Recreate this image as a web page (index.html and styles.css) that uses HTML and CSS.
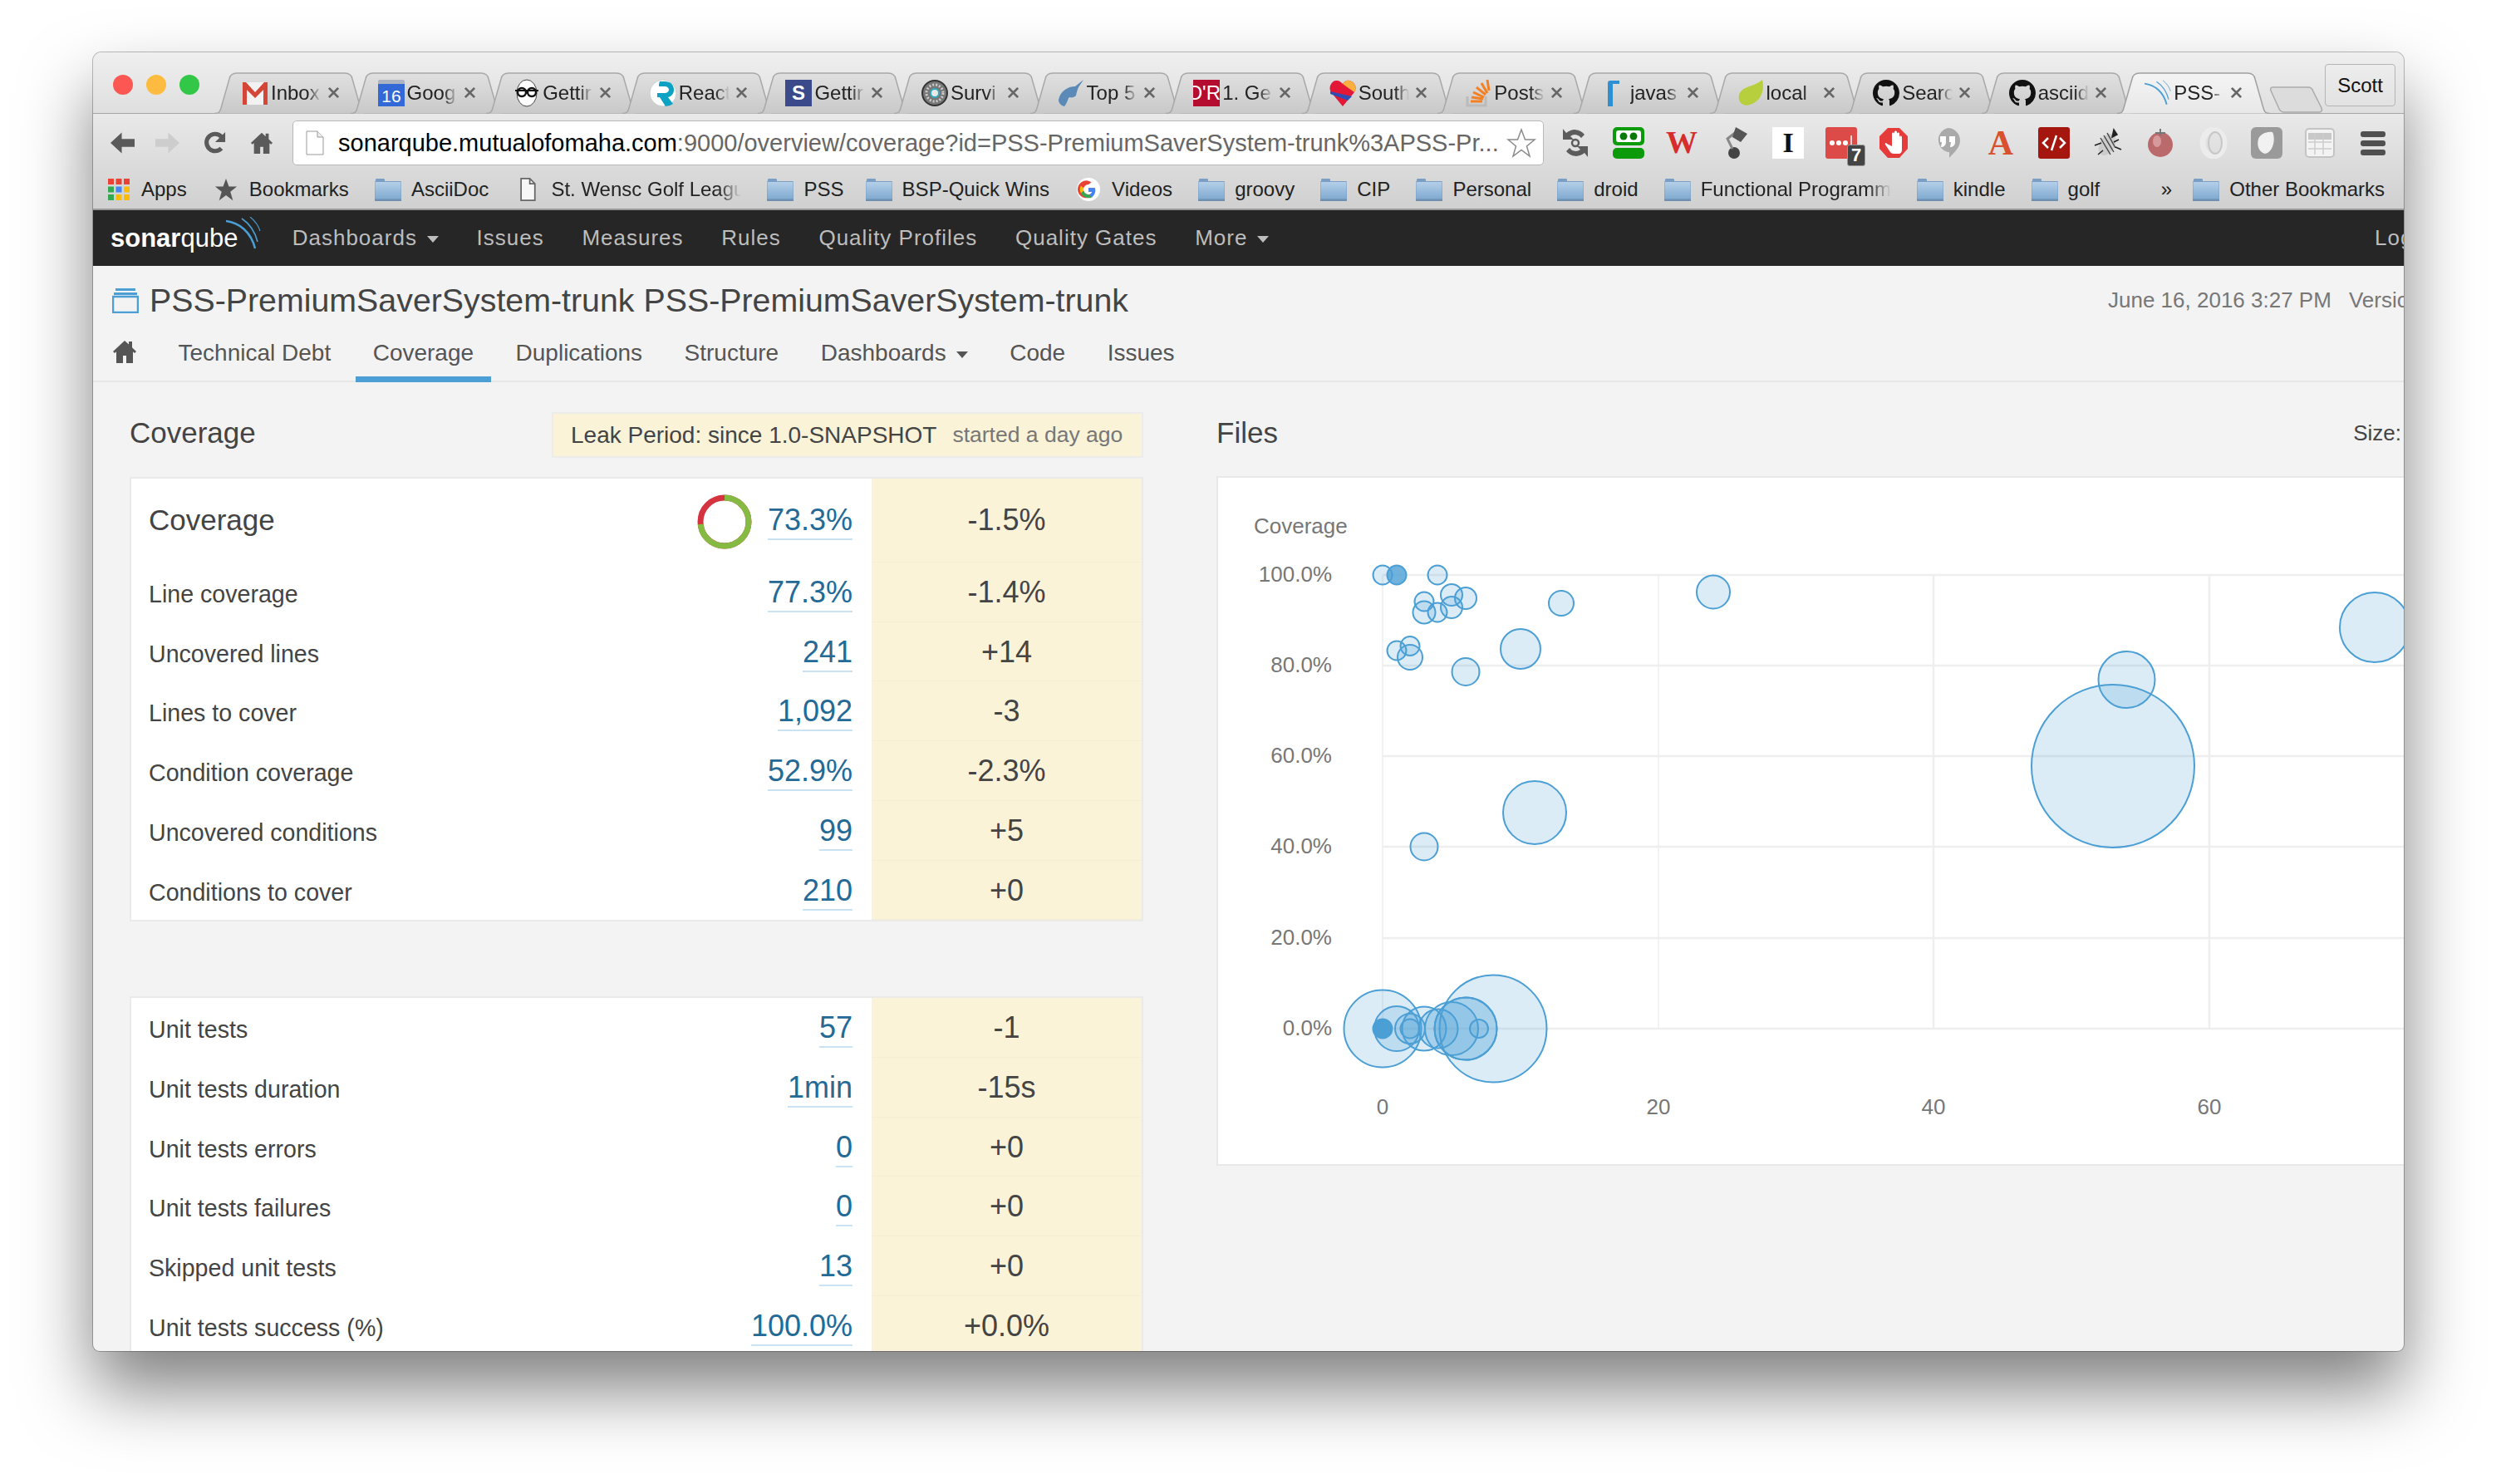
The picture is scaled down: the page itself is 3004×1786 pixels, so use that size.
FILE: index.html
```html
<!DOCTYPE html>
<html lang="en">
<head>
  <meta charset="UTF-8" />
  <title>PSS-PremiumSaverSystem-trunk - Coverage</title>
  <link rel="stylesheet" href="styles.css">
</head>
<body>
  <!-- shared icons -->
  <svg class="defs" width="0" height="0">
    <defs>
      <linearGradient id="tabFill" x1="0" y1="0" x2="0" y2="1"><stop offset="0" stop-color="#e0e0e0"/><stop offset="1" stop-color="#c9c9c9"/></linearGradient>
      <linearGradient id="tabActive" x1="0" y1="0" x2="0" y2="1"><stop offset="0" stop-color="#f4f4f4"/><stop offset="1" stop-color="#e8e8e8"/></linearGradient>
      <linearGradient id="folderFill" x1="0" y1="0" x2="0" y2="1"><stop offset="0" stop-color="#b4cfe8"/><stop offset="1" stop-color="#7fa9d0"/></linearGradient>
      <symbol id="tabShape" viewBox="0 0 184 50"><path d="M0 49.5C6 49.5 7 47 8 43L18 8C19 3 22 1 27 1H157C162 1 165 3 166 8L176 43C177 47 178 49.5 184 49.5"/></symbol>
      <symbol id="close" viewBox="0 0 16 16"><path d="M2 2L14 14M14 2L2 14" fill="none" stroke="#666" stroke-width="3"/></symbol>
      <symbol id="folder" viewBox="0 0 32 28"><path d="M1 4V2.500C1 1.500 1.500 1 2.500 1h8C11.500 1 12 1.500 12 2.500V4h19c.5 0 1 .5 1 1v23H0V5c0-.5.500-1 1-1z" fill="#7b9fc4"/><rect x="0.500" y="5" width="31" height="21" fill="url(#folderFill)"/><rect y="25.500" width="32" height="2.500" fill="#6f8fb1"/></symbol>
      <symbol id="octocat" viewBox="0 0 16 16"><path fill="#111" d="M8 0C3.580 0 0 3.580 0 8c0 3.540 2.290 6.530 5.470 7.590.4.070.55-.17.55-.38 0-.19-.01-.82-.01-1.490-2.010.37-2.530-.49-2.690-.94-.09-.23-.48-.94-.82-1.130-.28-.15-.68-.52-.01-.53.63-.01 1.080.58 1.230.82.72 1.210 1.870.87 2.330.66.07-.52.28-.87.51-1.070-1.780-.2-3.640-.89-3.640-3.950 0-.87.31-1.590.82-2.150-.08-.2-.36-1.020.08-2.120 0 0 .67-.21 2.200.82.64-.18 1.320-.27 2-.27s1.360.09 2 .27c1.530-1.040 2.200-.82 2.200-.82.44 1.100.16 1.920.08 2.120.51.56.82 1.270.82 2.150 0 3.070-1.870 3.750-3.650 3.950.29.25.54.73.54 1.480 0 1.070-.01 1.930-.01 2.200 0 .21.15.46.55.38A8.013 8.013 0 0 0 16 8c0-4.420-3.580-8-8-8z"/></symbol>
      <symbol id="sonarArcs" viewBox="0 0 42 40"><path d="M0 5C16 7 30 18 35 38" fill="none" stroke="#4b9fd5" stroke-width="2.500"/><path d="M19 2C28 8 35 18 38 30" fill="none" stroke="#4b9fd5" stroke-width="1.600"/><path d="M29 0C35 5 39 10 41 17" fill="none" stroke="#4b9fd5" stroke-width="1.100"/></symbol>
      <symbol id="homeIcon" viewBox="0 0 30 30"><path d="M15 2L1 15l2 2 2-1.800V29h8v-9h4v9h8V15.200L27 17l2-2-5-4.700V3h-4v3.600z"/></symbol>
    </defs>
  </svg>

  <div class="window">
    <div class="tabstrip">
      <div class="lights"><i class="red"></i><i class="yellow"></i><i class="green"></i></div>
      <div class="tabs">
        <div class="tab"><svg class="shape"><use href="#tabShape"/></svg>
          <svg class="fav" viewBox="0 0 32 32"><rect x="1" y="3" width="30" height="27" fill="#f2f2f2"/><path d="M1 3h4l11 12L27 3h4v27h-5V12L16 22 6 12v18H1z" fill="#d44638"/></svg>
          <span class="label">Inbox</span><svg class="x"><use href="#close"/></svg></div>
        <div class="tab"><svg class="shape"><use href="#tabShape"/></svg>
          <svg class="fav" viewBox="0 0 32 32"><rect y="0" width="32" height="10" rx="2" fill="#aeb4c0"/><rect y="5" width="32" height="27" fill="#3369d6"/><text x="16" y="27" class="cal">16</text></svg>
          <span class="label">Goog</span><svg class="x"><use href="#close"/></svg></div>
        <div class="tab"><svg class="shape"><use href="#tabShape"/></svg>
          <svg class="fav" viewBox="0 0 32 32"><ellipse cx="16" cy="16" rx="12" ry="16" fill="#fff" stroke="#444"/><circle cx="10" cy="15" r="5" fill="none" stroke="#111" stroke-width="2.500"/><circle cx="22" cy="15" r="5" fill="none" stroke="#111" stroke-width="2.500"/><path d="M2 13h28" stroke="#111" stroke-width="2"/></svg>
          <span class="label">Gettir</span><svg class="x"><use href="#close"/></svg></div>
        <div class="tab"><svg class="shape"><use href="#tabShape"/></svg>
          <svg class="fav" viewBox="0 0 32 32"><circle cx="16" cy="16" r="16" fill="#fff" stroke="#ccc"/><path d="M12 2h6c7 0 11 4 11 10 0 5-3 8-7 9l6 8a16 16 0 0 1-9 3l-7-11H9v-5h9c3 0 5-2 5-4s-2-4-5-4h-7c0-2 0-4 1-6z" fill="#0da2c4"/></svg>
          <span class="label">React</span><svg class="x"><use href="#close"/></svg></div>
        <div class="tab"><svg class="shape"><use href="#tabShape"/></svg>
          <svg class="fav" viewBox="0 0 32 32"><rect width="32" height="32" fill="#3b4a8a"/><text x="16" y="24" class="stackS">S</text></svg>
          <span class="label">Gettir</span><svg class="x"><use href="#close"/></svg></div>
        <div class="tab"><svg class="shape"><use href="#tabShape"/></svg>
          <svg class="fav" viewBox="0 0 32 32"><circle cx="16" cy="16" r="15" fill="#777" stroke="#333" stroke-width="2"/><circle cx="16" cy="16" r="10" fill="none" stroke="#ccc" stroke-width="3" stroke-dasharray="2 2"/><circle cx="16" cy="16" r="5" fill="#e8e8e8" stroke="#3ab" stroke-width="2"/></svg>
          <span class="label">Survi</span><svg class="x"><use href="#close"/></svg></div>
        <div class="tab"><svg class="shape"><use href="#tabShape"/></svg>
          <svg class="fav" viewBox="0 0 32 32"><path d="M31 0L21 8C12 8 3 14 1 24c0 3 2 7 7 8 4-5 4-9 6-11 3 1 6 0 8-2 1-5 2-8 3-10z" fill="#5b8ab8"/></svg>
          <span class="label">Top 5</span><svg class="x"><use href="#close"/></svg></div>
        <div class="tab"><svg class="shape"><use href="#tabShape"/></svg>
          <svg class="fav clipped" viewBox="0 0 32 32"><rect width="32" height="32" fill="#b50d2f"/><text x="33" y="24" class="oreilly">O'R</text></svg>
          <span class="label">1. Ge</span><svg class="x"><use href="#close"/></svg></div>
        <div class="tab"><svg class="shape"><use href="#tabShape"/></svg>
          <svg class="fav" viewBox="0 0 32 32"><path d="M16 32L2 15C-2 9 3 0 9 1c3 0 5 2 7 4 2-3 5-5 8-4 6 1 10 8 6 14z" fill="#e31837"/><path d="M16 5c2-3 5-5 8-4 6 1 10 8 6 14z" fill="#fbb040"/><path d="M1 14l26 6-5 5-21-8z" fill="#304cb2"/></svg>
          <span class="label">South</span><svg class="x"><use href="#close"/></svg></div>
        <div class="tab"><svg class="shape"><use href="#tabShape"/></svg>
          <svg class="fav" viewBox="0 0 32 32"><path d="M3 20v11h22V20" fill="none" stroke="#bbb" stroke-width="3"/><path d="M7 26h14M8 21l14 2M10 15l13 6M14 9l11 9M20 4l7 12M27 0l2 13" stroke="#f48024" stroke-width="3"/></svg>
          <span class="label">Posts</span><svg class="x"><use href="#close"/></svg></div>
        <div class="tab"><svg class="shape"><use href="#tabShape"/></svg>
          <svg class="fav" viewBox="0 0 32 32"><path d="M8 32V4c0-2 1-3 3-3h11v4H14v27z" fill="#2f8fd2"/></svg>
          <span class="label">javas</span><svg class="x"><use href="#close"/></svg></div>
        <div class="tab"><svg class="shape"><use href="#tabShape"/></svg>
          <svg class="fav" viewBox="0 0 32 32"><path d="M30 0c3 12-1 26-15 30C6 33 0 26 2 18 6 7 20 9 30 0z" fill="#b7cf3d"/></svg>
          <span class="label">local</span><svg class="x"><use href="#close"/></svg></div>
        <div class="tab"><svg class="shape"><use href="#tabShape"/></svg>
          <svg class="fav"><use href="#octocat"/></svg>
          <span class="label">Searc</span><svg class="x"><use href="#close"/></svg></div>
        <div class="tab"><svg class="shape"><use href="#tabShape"/></svg>
          <svg class="fav"><use href="#octocat"/></svg>
          <span class="label">asciid</span><svg class="x"><use href="#close"/></svg></div>
        <div class="tab active"><svg class="shape"><use href="#tabShape"/></svg>
          <svg class="fav"><use href="#sonarArcs"/></svg>
          <span class="label">PSS-</span><svg class="x"><use href="#close"/></svg></div>
      </div>
      <svg class="newtab" viewBox="0 0 64 32"><path d="M3 1H46C49 1 51 3 52 6L62 26C63 29 62 31 59 31H17C14 31 12 29 11 27L1 5C0 3 1 1 3 1z"/></svg>
      <div class="profile">Scott</div>
    </div>

    <div class="chrome">
      <div class="toolbar">
        <svg class="navbtn" viewBox="0 0 32 32" fill="#5a5a5a"><path d="M15 3L1 16l14 13v-8h16v-10H15z"/></svg>
        <svg class="navbtn" viewBox="0 0 32 32" fill="#cdcdcd"><path d="M17 3l14 13-14 13v-8H1v-10h16z"/></svg>
        <svg class="navbtn reload" viewBox="0 0 30 32"><path d="M24 23a11 11 0 1 1 0-15" fill="none" stroke="#5a5a5a" stroke-width="5.500"/><path d="M29 2v13H16z" fill="#5a5a5a"/></svg>
        <svg class="navbtn home" fill="#5a5a5a"><use href="#homeIcon"/></svg>
        <div class="omnibox">
          <svg class="pageicon" viewBox="0 0 22 30"><path d="M1 1h13l7 7v21H1z" fill="#fff" stroke="#999"/><path d="M14 1v7h7" fill="#eee" stroke="#999"/></svg>
          <div class="url"><b>sonarqube.mutualofomaha.com</b>:9000/overview/coverage?id=PSS-PremiumSaverSystem-trunk%3APSS-Pr...</div>
          <svg class="star" viewBox="0 0 36 36"><path d="M18 2l4.500 12H34l-9.500 8 3.500 12-10-7.500L8 34l3.500-12L2 14h11.500z" fill="#fff" stroke="#8a8a8a" stroke-width="1.500"/></svg>
        </div>
        <div class="extensions">
          <svg class="ext" viewBox="0 0 38 38"><path d="M30 9a15 15 0 0 0-22-2L4 2v13h13l-4-4a9 9 0 0 1 13 2zM8 29a15 15 0 0 0 22 2l4 5V23H21l4 4a9 9 0 0 1-13-2z" fill="#5c5c5c"/><circle cx="19" cy="19" r="4" fill="none" stroke="#5c5c5c" stroke-width="2.500"/></svg>
          <svg class="ext" viewBox="0 0 38 38"><rect width="38" height="22" rx="5" fill="#0a9a0a"/><rect x="4" y="4" width="30" height="14" rx="3" fill="#fff"/><circle cx="13" cy="11" r="4.500" fill="#0a7a0a"/><circle cx="25" cy="11" r="4.500" fill="#0a7a0a"/><rect y="25" width="38" height="13" rx="5" fill="#0a9a0a"/></svg>
          <svg class="ext" viewBox="0 0 38 38"><text x="19" y="31" class="extW">W</text></svg>
          <svg class="ext" viewBox="0 0 38 38"><circle cx="18" cy="31" r="7" fill="#444"/><path d="M16 26L10 14l14-11" fill="none" stroke="#888" stroke-width="3"/><path d="M20 0l14 8-8 10-10-6z" fill="#555"/></svg>
          <svg class="ext" viewBox="0 0 38 38"><rect width="38" height="38" fill="#fff"/><text x="19" y="30" class="extI">I</text></svg>
          <span class="ext-badge">
            <svg class="ext" viewBox="0 0 38 38"><rect width="38" height="38" rx="3" fill="#dd4b48"/><circle cx="8" cy="19" r="3" fill="#fff"/><circle cx="16" cy="19" r="3" fill="#fff"/><circle cx="24" cy="19" r="3" fill="#fff"/><path d="M31 10v18" stroke="#fff" stroke-width="1.500"/></svg>
            <span class="count">7</span>
          </span>
          <svg class="ext" viewBox="0 0 38 38"><path d="M11 1h14l10 10v15L25 37H11L1 26V11z" fill="#e53b3b"/><path d="M10 20c-1-2-3-1-2 1l6 9c1 1 2 2 4 2h6c3 0 4-2 4-5V12c0-2-3-2-3 0v5V8c0-2-3-2-3 0v9V6c0-2-3-2-3 0v11V8c0-2-3-2-3 0v15z" fill="#fff"/></svg>
          <svg class="ext" viewBox="0 0 38 38"><path d="M19 1a15 15 0 0 1 15 15c0 9-7 14-13 21v-7a14.500 14.500 0 0 1-2 0A15 15 0 0 1 19 1z" fill="#aaa"/><path d="M10 11h7v7c0 4-3 6-6 6l1-6h-2zM21 11h7v7c0 4-3 6-6 6l1-6h-2z" fill="#fff"/></svg>
          <svg class="ext" viewBox="0 0 38 38"><text x="19" y="33" class="extA">A</text></svg>
          <svg class="ext" viewBox="0 0 38 38"><rect width="38" height="38" rx="3" fill="#a5160f"/><path d="M12 13l-6 6 6 6M26 13l6 6-6 6M22 10l-6 18" fill="none" stroke="#fff" stroke-width="2.500"/></svg>
          <svg class="ext" viewBox="0 0 38 38"><ellipse cx="19" cy="21" rx="9" ry="14" transform="rotate(30 19 21)" fill="#ccc"/><path d="M11 13l12 20M15 10l12 20M19 7l10 18" stroke="#444" stroke-width="1.400"/><path d="M27 3l4 6-6 3zM4 22l8-3M8 33l6-5M33 15l-6 3M36 27l-7-3" stroke="#222" stroke-width="1.500" fill="#222"/></svg>
          <svg class="ext" viewBox="0 0 38 38"><circle cx="19" cy="21" r="15" fill="#bb6a6c"/><ellipse cx="15" cy="17" rx="5" ry="7" fill="#d69a9c"/><path d="M19 2v8M13 7h12" stroke="#777" stroke-width="2"/></svg>
          <svg class="ext" viewBox="0 0 38 38"><ellipse cx="19" cy="19" rx="13" ry="16" fill="none" stroke="#ececec" stroke-width="7"/><ellipse cx="21" cy="19" rx="8" ry="13" fill="none" stroke="#c6c6c6" stroke-width="2"/></svg>
          <svg class="ext" viewBox="0 0 38 38"><rect width="38" height="38" rx="6" fill="#9a9a9a"/><path d="M26 6c4 8 1 24-9 26C9 30 6 20 10 12c4-5 10-7 16-6z" fill="#f1f1f1"/></svg>
          <svg class="ext" viewBox="0 0 38 38"><rect x="2" y="2" width="34" height="34" rx="4" fill="#f3f3f3" stroke="#c4c4c4" stroke-width="2"/><path d="M5 7h28v8H5z" fill="#c8c8c8"/><path d="M13 7v26M23 7v26M5 18h28M5 26h28" stroke="#ccc" stroke-width="1.500"/></svg>
          <svg class="ext" viewBox="0 0 38 38"><rect x="4" y="5" width="30" height="7" rx="3" fill="#505050"/><rect x="4" y="16" width="30" height="7" rx="3" fill="#505050"/><rect x="4" y="27" width="30" height="7" rx="3" fill="#505050"/></svg>
        </div>
      </div>
      <div class="bookmarks">
        <a class="bm"><svg class="bm-icon apps" viewBox="0 0 26 26"><rect width="7" height="7" fill="#ea4335"/><rect x="9.500" width="7" height="7" fill="#ea4335"/><rect x="19" width="7" height="7" fill="#ea4335"/><rect y="9.500" width="7" height="7" fill="#34a853"/><rect x="9.500" y="9.500" width="7" height="7" fill="#4285f4"/><rect x="19" y="9.500" width="7" height="7" fill="#fbbc05"/><rect y="19" width="7" height="7" fill="#34a853"/><rect x="9.500" y="19" width="7" height="7" fill="#fbbc05"/><rect x="19" y="19" width="7" height="7" fill="#fbbc05"/></svg>Apps</a>
        <a class="bm"><svg class="bm-icon" viewBox="0 0 32 32"><path d="M16 1l4 11h11l-9 7 3.500 12L16 24l-9.500 7L10 19l-9-7h11z" fill="#555"/></svg>Bookmarks</a>
        <a class="bm"><svg class="bm-icon"><use href="#folder"/></svg>AsciiDoc</a>
        <a class="bm"><svg class="bm-icon" viewBox="0 0 32 32"><path d="M7 1h12l7 7v23H7z" fill="#f7f7f7" stroke="#666" stroke-width="2"/><path d="M19 1v7h7" fill="none" stroke="#666" stroke-width="2"/></svg><span class="fade">St. Wensc Golf Leagu</span></a>
        <a class="bm tight"><svg class="bm-icon"><use href="#folder"/></svg>PSS</a>
        <a class="bm"><svg class="bm-icon"><use href="#folder"/></svg>BSP-Quick Wins</a>
        <a class="bm"><svg class="bm-icon" viewBox="0 0 32 32"><circle cx="16" cy="16" r="16" fill="#fff"/><path d="M25 14h-9v5h5c-1 3-3 4-5 4a7 7 0 0 1 0-14l4-3a12 12 0 1 0 5 8z" fill="#ea4335"/><path d="M5.500 11a12 12 0 0 0 0 10l4-3a7 7 0 0 1 0-4z" fill="#fbbc05"/><path d="M5.500 21a12 12 0 0 0 15 6l-3-4a7 7 0 0 1-8-5z" fill="#34a853"/><path d="M25 14h-9v5h5c-.5 2-2 3-3.500 4l3 4c4-3 6-8 4.500-13z" fill="#4285f4"/></svg>Videos</a>
        <a class="bm"><svg class="bm-icon"><use href="#folder"/></svg>groovy</a>
        <a class="bm"><svg class="bm-icon"><use href="#folder"/></svg>CIP</a>
        <a class="bm"><svg class="bm-icon"><use href="#folder"/></svg>Personal</a>
        <a class="bm"><svg class="bm-icon"><use href="#folder"/></svg>droid</a>
        <a class="bm"><svg class="bm-icon"><use href="#folder"/></svg><span class="fade">Functional Programm</span></a>
        <a class="bm"><svg class="bm-icon"><use href="#folder"/></svg>kindle</a>
        <a class="bm"><svg class="bm-icon"><use href="#folder"/></svg>golf</a>
        <span class="more">»</span>
        <a class="bm"><svg class="bm-icon"><use href="#folder"/></svg>Other Bookmarks</a>
      </div>
    </div>

    <nav class="global-nav">
      <a class="logo"><b>sonar</b>qube<svg class="arcs"><use href="#sonarArcs"/></svg></a>
      <a class="caret">Dashboards</a>
      <a>Issues</a>
      <a>Measures</a>
      <a>Rules</a>
      <a>Quality Profiles</a>
      <a>Quality Gates</a>
      <a class="caret">More</a>
      <a class="login">Log in</a>
    </nav>

    <header class="project">
      <div class="project-title">
        <svg class="qualifier" viewBox="0 0 32 30"><path d="M4 0h24v3H4zM2 5h28v3H2z" fill="#4b9fd5"/><rect x="1" y="10" width="30" height="19" fill="none" stroke="#4b9fd5" stroke-width="2.500"/></svg>
        <h1>PSS-PremiumSaverSystem-trunk PSS-PremiumSaverSystem-trunk</h1>
        <div class="project-meta"><span>June 16, 2016 3:27 PM</span><span>Version 1.0-SNAPSHOT</span></div>
      </div>
      <div class="project-nav">
        <svg class="project-home" fill="#555"><use href="#homeIcon"/></svg>
        <a>Technical Debt</a>
        <a class="active">Coverage</a>
        <a>Duplications</a>
        <a>Structure</a>
        <a class="caret">Dashboards</a>
        <a>Code</a>
        <a>Issues</a>
      </div>
    </header>

    <main class="content">
      <section class="measures">
        <div class="section-head">
          <h2>Coverage</h2>
          <div class="leak-period">Leak Period: since 1.0-SNAPSHOT <small>started a day ago</small></div>
        </div>

        <table class="card">
          <tr class="main-row">
            <td class="name">Coverage</td>
            <td class="value">
              <svg class="donut" viewBox="0 0 66 66"><circle cx="33" cy="33" r="29" fill="none" stroke="#d4333f" stroke-width="7"/><circle cx="33" cy="33" r="29" fill="none" stroke="#85bb43" stroke-width="7" stroke-dasharray="133.600 182.200" transform="rotate(-90 33 33)"/></svg>
              <a>73.3%</a>
            </td>
            <td class="leak">-1.5%</td>
          </tr>
          <tr><td class="name">Line coverage</td><td class="value"><a>77.3%</a></td><td class="leak">-1.4%</td></tr>
          <tr><td class="name">Uncovered lines</td><td class="value"><a>241</a></td><td class="leak">+14</td></tr>
          <tr><td class="name">Lines to cover</td><td class="value"><a>1,092</a></td><td class="leak">-3</td></tr>
          <tr><td class="name">Condition coverage</td><td class="value"><a>52.9%</a></td><td class="leak">-2.3%</td></tr>
          <tr><td class="name">Uncovered conditions</td><td class="value"><a>99</a></td><td class="leak">+5</td></tr>
          <tr><td class="name">Conditions to cover</td><td class="value"><a>210</a></td><td class="leak">+0</td></tr>
        </table>

        <table class="card tests">
          <tr><td class="name">Unit tests</td><td class="value"><a>57</a></td><td class="leak">-1</td></tr>
          <tr><td class="name">Unit tests duration</td><td class="value"><a>1min</a></td><td class="leak">-15s</td></tr>
          <tr><td class="name">Unit tests errors</td><td class="value"><a>0</a></td><td class="leak">+0</td></tr>
          <tr><td class="name">Unit tests failures</td><td class="value"><a>0</a></td><td class="leak">+0</td></tr>
          <tr><td class="name">Skipped unit tests</td><td class="value"><a>13</a></td><td class="leak">+0</td></tr>
          <tr><td class="name">Unit tests success (%)</td><td class="value"><a>100.0%</a></td><td class="leak">+0.0%</td></tr>
        </table>
      </section>

      <section class="files">
        <div class="section-head">
          <h2>Files</h2>
          <div class="size-select">Size:</div>
        </div>
        <div class="chart-card">
          <svg class="chart" viewBox="1466 575 1427 826">
            <text x="1509" y="642" class="axis">Coverage</text>

            <!-- grid -->
            <path class="grid" d="M1664 692H2893M1664 801H2893M1664 910H2893M1664 1019H2893M1664 1129H2893M1664 1238H2893"/>
            <path class="grid thin" d="M1664 692V1238M1996 692V1238"/>
            <path class="grid" d="M2327 692V1238M2659 692V1238"/>

            <text x="1603" y="700" class="axis end">100.0%</text>
            <text x="1603" y="809" class="axis end">80.0%</text>
            <text x="1603" y="918" class="axis end">60.0%</text>
            <text x="1603" y="1027" class="axis end">40.0%</text>
            <text x="1603" y="1137" class="axis end">20.0%</text>
            <text x="1603" y="1246" class="axis end">0.0%</text>
            <text x="1664" y="1341" class="axis mid">0</text>
            <text x="1996" y="1341" class="axis mid">20</text>
            <text x="2327" y="1341" class="axis mid">40</text>
            <text x="2659" y="1341" class="axis mid">60</text>

            <!-- bubbles -->
            <circle class="bubble" cx="1664" cy="692" r="11.500"/>
            <circle class="bubble dense" cx="1681" cy="692" r="11.500"/>
            <circle class="bubble" cx="1730" cy="692" r="11.500"/>
            <circle class="bubble" cx="1747" cy="716" r="13"/>
            <circle class="bubble" cx="1764" cy="720" r="13"/>
            <circle class="bubble" cx="1714" cy="724" r="11.500"/>
            <circle class="bubble" cx="1714" cy="737" r="13.500"/>
            <circle class="bubble" cx="1730" cy="737" r="11.500"/>
            <circle class="bubble" cx="1747" cy="731" r="13"/>
            <circle class="bubble" cx="1879" cy="726" r="15"/>
            <circle class="bubble" cx="2062" cy="712.500" r="20"/>
            <circle class="bubble" cx="1697" cy="777.500" r="11.500"/>
            <circle class="bubble" cx="1681" cy="783" r="11.500"/>
            <circle class="bubble" cx="1697" cy="791" r="15"/>
            <circle class="bubble" cx="1764" cy="808.500" r="16.500"/>
            <circle class="bubble" cx="1830" cy="781" r="24"/>
            <circle class="bubble" cx="1847" cy="978" r="38"/>
            <circle class="bubble" cx="1714" cy="1019" r="16.500"/>

            <circle class="bubble" cx="1664" cy="1238" r="46.500"/>
            <circle class="bubble" cx="1681" cy="1238" r="27"/>
            <circle class="bubble" cx="1697" cy="1238" r="18"/>
            <circle class="bubble" cx="1697" cy="1238" r="11.500"/>
            <circle class="bubble" cx="1714" cy="1238" r="26.500"/>
            <circle class="bubble" cx="1797" cy="1238" r="64.500"/>
            <circle class="bubble" cx="1731" cy="1238" r="23.500"/>
            <circle class="bubble" cx="1747" cy="1238" r="32"/>
            <circle class="bubble" cx="1764" cy="1238" r="37.500"/>
            <circle class="bubble" cx="1764" cy="1238" r="37.500"/>
            <circle class="bubble" cx="1780" cy="1238" r="11"/>
            <circle class="bubble solid" cx="1664" cy="1238" r="11.500"/>

            <circle class="bubble" cx="2543" cy="922" r="98"/>
            <circle class="bubble" cx="2559.500" cy="818" r="34"/>
            <circle class="bubble" cx="2858" cy="755" r="42"/>
          </svg>
        </div>
      </section>
    </main>
  </div>
</body>
</html>
```

FILE: styles.css
```css
* {
  margin: 0;
  padding: 0;
  box-sizing: border-box;
}

html, body {
  height: 100%;
}

body {
  background: #fff;
  font-family: "Liberation Sans", Arial, sans-serif;
  padding: 63px 111px 0 112px;
  overflow: hidden;
  color: #444;
}

.defs {
  display: block;
  height: 0;
}

.window {
  width: 2781px;
  height: 1563px;
  display: flex;
  flex-direction: column;
  overflow: hidden;
  background: #f3f3f3;
  border-radius: 10px 10px 8px 8px;
  box-shadow: 0 46px 84px rgba(0, 0, 0, 0.5), 0 0 0 1px rgba(0, 0, 0, 0.25);
}

/* tab strip */
.tabstrip {
  height: 74px;
  flex: none;
  display: flex;
  align-items: flex-end;
  position: relative;
  z-index: 1;
  background: linear-gradient(#efefef, #dfdfdf);
  border-bottom: 1px solid #a6a6a6;
}

.lights {
  width: 146px;
  align-self: flex-start;
  display: flex;
  gap: 16px;
  padding: 27px 0 0 24px;
}

.lights i {
  width: 24px;
  height: 24px;
  border-radius: 50%;
}

.lights .red { background: #fc5753; }
.lights .yellow { background: #fdbc40; }
.lights .green { background: #33c748; }

.tabs {
  display: flex;
  height: 49px;
}

.tab {
  width: 163.6px;
  height: 49px;
  position: relative;
  display: flex;
  align-items: center;
  padding-left: 33px;
  font-size: 24px;
  color: #222;
}

.tab .shape {
  position: absolute;
  left: 0;
  top: 0;
  width: 184px;
  height: 50px;
  fill: url(#tabFill);
  stroke: #a8a8a8;
  stroke-width: 1.5;
}

.tab.active .shape {
  fill: url(#tabActive);
  stroke: #a0a0a0;
}

.tab.active {
  z-index: 2;
}

.tab .fav,
.tab .label,
.tab .x {
  position: relative;
  flex: none;
}

.tab .fav {
  width: 32px;
  height: 32px;
  overflow: visible;
}

.tab .fav.clipped {
  overflow: hidden;
}

.tab .label {
  width: 61px;
  margin-left: 3px;
  white-space: nowrap;
  -webkit-mask-image: linear-gradient(to right, #000 72%, transparent 100%);
  mask-image: linear-gradient(to right, #000 72%, transparent 100%);
}

.tab .x {
  width: 15px;
  height: 15px;
  margin-left: 7px;
}

.newtab {
  width: 64px;
  height: 32px;
  margin-left: 20px;
  fill: #dcdcdc;
  stroke: #aaa;
  stroke-width: 1.5;
}

.profile {
  width: 85px;
  height: 51px;
  margin: 14px 10px 0 auto;
  align-self: flex-start;
  display: flex;
  align-items: center;
  justify-content: center;
  font-size: 24px;
  color: #111;
  background: linear-gradient(#ededed, #e2e2e2);
  border: 1px solid #b4b4b4;
  border-radius: 4px;
}

.cal {
  font-size: 21px;
  fill: #fff;
  text-anchor: middle;
}

.stackS {
  font-size: 24px;
  font-weight: bold;
  fill: #fff;
  text-anchor: middle;
}

.oreilly {
  font-size: 24px;
  fill: #fff;
  text-anchor: end;
}

/* toolbar + bookmarks */
.chrome {
  flex: none;
  height: 116px;
  background: linear-gradient(#e9e9e9, #d0d0d0);
  border-bottom: 2px solid #989898;
}

.toolbar {
  height: 70px;
  display: flex;
  align-items: center;
  padding: 0 0 0 20px;
}

.navbtn {
  width: 31px;
  height: 32px;
  margin-right: 23px;
  flex: none;
}

.reload {
  width: 28px;
  margin-left: 4px;
  margin-right: 29px;
}

.navbtn.home {
  width: 28px;
  margin-right: 23px;
}

.omnibox {
  width: 1506px;
  height: 54px;
  flex: none;
  display: flex;
  align-items: center;
  padding: 0 8px 0 15px;
  background: #fff;
  border: 1px solid #b8b8b8;
  border-radius: 5px;
}

.pageicon {
  width: 22px;
  height: 30px;
  flex: none;
}

.url {
  margin-left: 17px;
  flex: 1;
  font-size: 29px;
  color: #666;
  white-space: nowrap;
}

.url b {
  font-weight: normal;
  color: #000;
}

.star {
  width: 36px;
  height: 36px;
  flex: none;
}

.extensions {
  display: flex;
  align-items: center;
  gap: 26px;
  margin-left: 19px;
}

.ext {
  width: 38px;
  height: 38px;
  display: block;
  flex: none;
}

.ext-badge {
  position: relative;
  display: block;
}

.count {
  position: absolute;
  left: 26px;
  top: 21px;
  width: 22px;
  height: 26px;
  background: #444;
  border: 1px solid #999;
  border-radius: 3px;
  color: #fff;
  font-size: 22px;
  font-weight: bold;
  line-height: 24px;
  text-align: center;
}

.extW {
  font-family: "Liberation Serif", serif;
  font-size: 38px;
  font-weight: bold;
  fill: #d62c2c;
  text-anchor: middle;
}

.extI {
  font-family: "Liberation Serif", serif;
  font-size: 34px;
  font-weight: bold;
  fill: #111;
  text-anchor: middle;
}

.extA {
  font-family: "Liberation Serif", serif;
  font-size: 42px;
  font-weight: bold;
  fill: #d9502e;
  text-anchor: middle;
}

.bookmarks {
  height: 44px;
  display: flex;
  align-items: center;
  gap: 31.1px;
  padding: 0 23px 3px 18px;
  font-size: 24px;
  color: #222;
}

.bm {
  display: flex;
  align-items: center;
  gap: 12px;
  white-space: nowrap;
  flex: none;
}

.bm.tight {
  margin-right: -5px;
}

.bm-icon {
  width: 32px;
  height: 28px;
  flex: none;
}

.bm-icon.apps {
  width: 26px;
  height: 26px;
  margin-right: 2px;
}

.bm .fade {
  width: 229px;
  white-space: nowrap;
  -webkit-mask-image: linear-gradient(to right, #000 88%, transparent 100%);
  mask-image: linear-gradient(to right, #000 88%, transparent 100%);
}

.more {
  margin-left: auto;
  margin-right: -6px;
}

/* sonarqube global nav */
.global-nav {
  flex: none;
  height: 67px;
  display: flex;
  align-items: center;
  gap: 45.7px;
  padding-left: 21px;
  background: #262626;
  color: #bdbdbd;
  font-size: 26px;
  letter-spacing: 1px;
}

.global-nav a {
  white-space: nowrap;
  flex: none;
}

.logo {
  position: relative;
  width: 181px;
  margin-right: -8px;
  font-size: 31px;
  letter-spacing: 0;
  color: #fff;
}

.arcs {
  position: absolute;
  left: 139px;
  top: -8px;
  width: 42px;
  height: 40px;
}

.caret::after {
  content: "";
  display: inline-block;
  margin-left: 12px;
  vertical-align: 3px;
  border-left: 7px solid transparent;
  border-right: 7px solid transparent;
  border-top: 8px solid currentColor;
}

.global-nav .login {
  margin-left: auto;
  width: 35px;
  overflow: hidden;
}

/* project header */
.project {
  flex: none;
}

.project-title {
  height: 83px;
  display: flex;
  align-items: center;
  padding-left: 23px;
}

.qualifier {
  width: 32px;
  height: 30px;
  flex: none;
  margin-right: 13px;
}

h1 {
  font-size: 39.35px;
  font-weight: normal;
  color: #444;
  white-space: nowrap;
}

.project-meta {
  margin-left: auto;
  width: 356px;
  display: flex;
  gap: 21px;
  flex: none;
  overflow: hidden;
  white-space: nowrap;
  font-size: 26px;
  color: #777;
}

.project-nav {
  height: 57px;
  display: flex;
  align-items: stretch;
  gap: 8.5px;
  padding-left: 23px;
  border-bottom: 2px solid #e6e6e6;
  font-size: 28px;
  color: #555;
}

.project-home {
  width: 30px;
  height: 30px;
  margin: 5px 20px 0 0;
}

.project-nav a {
  padding: 4px 21px 0;
  height: 57px;
  line-height: 36px;
}

.project-nav a.active {
  border-bottom: 7px solid #4b9fd5;
}

/* main */
.content {
  flex: none;
  display: flex;
  gap: 88px;
  padding: 36px 0 0 44px;
}

.measures {
  width: 1220px;
  flex: none;
}

.files {
  flex: 1;
  min-width: 0;
}

.section-head {
  height: 55px;
  display: flex;
  align-items: center;
  justify-content: space-between;
  margin-bottom: 23px;
}

.files .section-head {
  margin-bottom: 22px;
}

h2 {
  font-size: 35px;
  font-weight: normal;
  color: #444;
  margin-top: -5px;
}

.leak-period {
  width: 712px;
  height: 55px;
  display: flex;
  align-items: center;
  gap: 19px;
  padding-left: 21px;
  background: #faf3d8;
  border: 2px solid #ececec;
  font-size: 28px;
  white-space: nowrap;
}

.leak-period small {
  font-size: 26.5px;
  color: #777;
}

.card {
  width: 1220px;
  table-layout: fixed;
  border-collapse: separate;
  border-spacing: 0;
  background: #fff;
  border: 2px solid #eaeaea;
}

.card.tests {
  margin-top: 90px;
}

.card td {
  height: 71.7px;
  line-height: 71.7px;
  vertical-align: baseline;
  white-space: nowrap;
}

.card .name {
  width: 650px;
  padding-left: 21px;
  font-size: 28.6px;
  line-height: 40px;
}

.card .value {
  padding-right: 23px;
  text-align: right;
  font-size: 36px;
}

.card .value a {
  color: #236a97;
  border-bottom: 2px solid #cae3f2;
  padding-bottom: 2px;
}

.card .leak {
  width: 325px;
  text-align: center;
  font-size: 36px;
  color: #444;
  background: #faf3d8;
  box-shadow: inset 0 -1px 0 #f6eed2;
}

.card .main-row td {
  height: 101px;
  line-height: 100px;
}

.card .main-row .name {
  font-size: 35px;
  line-height: 42px;
}

.donut {
  width: 66px;
  height: 66px;
  vertical-align: middle;
  margin-right: 9px;
}

/* chart */
.size-select {
  padding-right: 3px;
  font-size: 26px;
  color: #444;
  margin-top: -5px;
}

.chart-card {
  height: 830px;
  background: #fff;
  border: 2px solid #e8e8e8;
  border-right: 0;
}

.chart {
  display: block;
  width: 1427px;
  height: 826px;
  font-size: 26px;
}

.axis {
  fill: #777;
}

.axis.end {
  text-anchor: end;
}

.axis.mid {
  text-anchor: middle;
}

.grid {
  fill: none;
  stroke: #eee;
  stroke-width: 2.5;
}

.grid.thin {
  stroke-width: 1.5;
}

.bubble {
  fill: #4b9fd5;
  fill-opacity: 0.2;
  stroke: #4b9fd5;
  stroke-width: 2;
}

.bubble.dense {
  fill-opacity: 0.8;
}

.bubble.solid {
  fill-opacity: 1;
}
```
